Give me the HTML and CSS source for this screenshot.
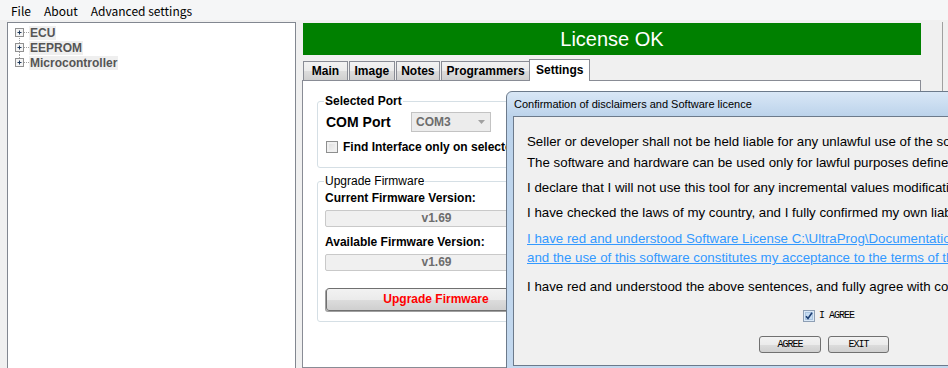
FILE: index.html
```html
<!DOCTYPE html>
<html lang="en">
<head>
    <meta charset="UTF-8">
    <meta name="viewport" content="width=device-width, initial-scale=1.0">
    <title>UltraProg</title>
    <link rel="stylesheet" href="styles.css">
</head>
<body>
    <div class="menubar">
        <span class="menu-item">File</span>
        <span class="menu-item">About</span>
        <span class="menu-item">Advanced settings</span>
    </div>

    <div class="workspace">
        <div class="tree">
            <div class="node">
                <svg class="expander" width="14" height="15" viewBox="0 0 14 15">
                    <line x1="4.5" y1="11" x2="4.5" y2="15" class="dots"/>
                    <line x1="9" y1="7.5" x2="14" y2="7.5" class="dots"/>
                    <rect x="0.5" y="3.5" width="8" height="8" class="box"/>
                    <path d="M2.5 7.5h4M4.5 5.5v4" class="cross"/>
                </svg>
                <span class="node-label">ECU</span>
            </div>
            <div class="node">
                <svg class="expander" width="14" height="15" viewBox="0 0 14 15">
                    <line x1="4.5" y1="0" x2="4.5" y2="3" class="dots"/>
                    <line x1="4.5" y1="12" x2="4.5" y2="15" class="dots"/>
                    <line x1="9" y1="7.5" x2="14" y2="7.5" class="dots"/>
                    <rect x="0.5" y="3.5" width="8" height="8" class="box"/>
                    <path d="M2.5 7.5h4M4.5 5.5v4" class="cross"/>
                </svg>
                <span class="node-label">EEPROM</span>
            </div>
            <div class="node">
                <svg class="expander" width="14" height="15" viewBox="0 0 14 15">
                    <line x1="4.5" y1="0" x2="4.5" y2="3" class="dots"/>
                    <line x1="9" y1="7.5" x2="14" y2="7.5" class="dots"/>
                    <rect x="0.5" y="3.5" width="8" height="8" class="box"/>
                    <path d="M2.5 7.5h4M4.5 5.5v4" class="cross"/>
                </svg>
                <span class="node-label">Microcontroller</span>
            </div>
        </div>

        <div class="right">
            <div class="license">License OK</div>

            <div class="tabs">
                <div class="tab tab-main">Main</div>
                <div class="tab">Image</div>
                <div class="tab">Notes</div>
                <div class="tab">Programmers</div>
                <div class="tab active">Settings</div>
            </div>

            <div class="page">
                <fieldset class="group">
                    <legend class="bold">Selected Port</legend>
                    <div class="port-row">
                        <span class="port-label">COM Port</span>
                        <div class="combo">
                            <span>COM3</span>
                            <svg width="7" height="4" viewBox="0 0 7 4"><path d="M0 0h7L3.5 4z" fill="#a0a0a0"/></svg>
                        </div>
                    </div>
                    <div class="check-row">
                        <span class="checkbox"></span>
                        <span class="bold">Find Interface only on selected port</span>
                    </div>
                </fieldset>

                <fieldset class="group firmware">
                    <legend>Upgrade Firmware</legend>
                    <div class="field-label first">Current Firmware Version:</div>
                    <div class="field-box">v1.69</div>
                    <div class="field-label">Available Firmware Version:</div>
                    <div class="field-box">v1.69</div>
                    <div class="upgrade-btn">Upgrade Firmware</div>
                </fieldset>
            </div>
        </div>

        <div class="side"></div>
    </div>

    <div class="dialog">
        <div class="dialog-title">Confirmation of disclaimers and Software licence</div>
        <div class="dialog-body">
            <p class="line">Seller or developer shall not be held liable for any unlawful use of the software and hardware.</p>
            <p class="line l2">The software and hardware can be used only for lawful purposes defined by law of your country.</p>
            <p class="line l3">I declare that I will not use this tool for any incremental values modification of odometers.</p>
            <p class="line l3">I have checked the laws of my country, and I fully confirmed my own liability for using it.</p>
            <p class="line link">I have red and understood Software License C:\UltraProg\Documentation\License.pdf<br>and the use of this software constitutes my acceptance to the terms of this license.</p>
            <p class="line l6">I have red and understood the above sentences, and fully agree with conditions.</p>

            <div class="agree-row">
                <svg width="12" height="12" viewBox="0 0 12 12">
                    <rect x="0.5" y="0.5" width="11" height="11" fill="#dbe9f7" stroke="#8e9fb4"/>
                    <rect x="2.5" y="2.5" width="7" height="7" fill="#c6dcf2" stroke="#aac4e0"/>
                    <path d="M3 6.2l2 2.3L9 2.8" fill="none" stroke="#1d3f73" stroke-width="1.6"/>
                </svg>
                <span class="agree-text">I AGREE</span>
            </div>

            <div class="button-row">
                <div class="win-btn agree">AGREE</div>
                <div class="win-btn exit">EXIT</div>
            </div>
        </div>
    </div>
</body>
</html>
```

FILE: styles.css
```css
* {
    box-sizing: border-box;
}
html, body {
    margin: 0;
    height: 100%;
    overflow: hidden;
}
body {
    position: relative;
    background: #f0f0f0;
    font-family: "Liberation Sans", Arial, sans-serif;
    font-size: 12px;
    color: #000;
}
.bold {
    font-weight: bold;
}

/* menu */
.menubar {
    height: 20px;
    display: flex;
    align-items: center;
    gap: 13px;
    padding-left: 11px;
    background: #f5f6f7;
    font-family: "Noto Sans CJK SC", "Noto Sans", sans-serif;
    font-size: 12px;
}

.workspace {
    display: flex;
    height: 348px;
    padding: 2px 0 0 7px;
}

/* tree */
.tree {
    width: 289px;
    height: 360px;
    background: #fff;
    border: 1px solid #828790;
    padding: 2px 0 0 7px;
}
.node {
    display: flex;
    align-items: center;
    height: 15px;
}
.expander {
    flex: none;
}
.expander .dots {
    stroke: #a0a0a0;
    stroke-dasharray: 1 1;
}
.expander .box {
    fill: #f4f4f4;
    stroke: #919191;
}
.expander .cross {
    stroke: #1e395b;
}
.node-label {
    font-weight: bold;
    color: #555;
    background: #efefef;
    line-height: 14px;
    padding: 0 1px;
}

/* right pane */
.right {
    width: 619px;
    margin-left: 6px;
    display: flex;
    flex-direction: column;
}
.license {
    height: 32px;
    margin: 1px 0 0 1px;
    background: #008000;
    color: #fff;
    font-size: 20px;
    line-height: 32px;
    text-align: center;
}
.tabs {
    display: flex;
    align-items: flex-start;
    height: 22px;
    margin: 4px 0 -1px 0;
    padding-left: 1px;
    position: relative;
    z-index: 1;
}
.tab {
    height: 19px;
    margin-top: 2px;
    margin-right: 1px;
    padding: 0 4.5px;
    line-height: 18px;
    font-weight: bold;
    border: 1px solid #898c95;
    border-bottom: none;
    background: linear-gradient(#f2f2f2, #ebebeb 50%, #dddddd 50%, #cfcfcf);
}
.tab-main {
    min-width: 45px;
    text-align: center;
}
.tab.active {
    height: 22px;
    margin-top: 0;
    margin-left: -2px;
    padding: 0 6px;
    line-height: 20px;
    background: #fff;
}
.page {
    flex: 1;
    background: #fff;
    border: 1px solid #898c95;
    padding: 13px 0 0 14px;
}

.group {
    width: 245px;
    margin: 0;
    padding: 0 6px 14px 6px;
    border: 1px solid #d5dfe5;
    border-radius: 3px;
}
.group legend {
    padding: 0 1px;
    line-height: 14px;
}
.port-row {
    display: flex;
    align-items: center;
    height: 20px;
    margin: 4px 0 0 2px;
}
.port-label {
    width: 85px;
    font-size: 14px;
    font-weight: bold;
}
.combo {
    width: 80px;
    height: 20px;
    display: flex;
    align-items: center;
    justify-content: space-between;
    padding: 0 5px 0 4px;
    background: #ececec;
    border: 1px solid #c3c3c3;
    color: #6d6d6d;
    font-weight: bold;
}
.check-row {
    display: flex;
    align-items: center;
    gap: 5px;
    height: 13px;
    margin: 8px 0 0 2px;
    white-space: nowrap;
}
.checkbox {
    width: 12px;
    height: 12px;
    border: 1px solid #8e8f8f;
    background: linear-gradient(135deg, #dcdcdc, #f6f6f6);
    box-shadow: inset 0 0 0 2px #f0f0f0;
}

.firmware {
    margin-top: 6px;
    padding-bottom: 10px;
}
.field-label {
    font-weight: bold;
    line-height: 14px;
    margin: 8px 0 0 1px;
}
.field-label.first {
    margin-top: 3px;
}
.field-box {
    width: 223px;
    height: 17px;
    margin: 5px 0 0 1px;
    background: #f0f0f0;
    border: 1px solid #c9c9c9;
    border-radius: 2px;
    color: #6d6d6d;
    font-weight: bold;
    text-align: center;
    line-height: 15px;
}
.upgrade-btn {
    width: 220px;
    height: 23px;
    margin: 17px 0 0 2px;
    border: 1px solid #707070;
    border-radius: 3px;
    box-shadow: -1px 1px 0 #a0a0a0;
    background: linear-gradient(#f2f2f2, #ebebeb 50%, #dddddd 50%, #cfcfcf);
    color: #ff0000;
    font-weight: bold;
    text-align: center;
    line-height: 21px;
}

.side {
    flex: 1;
    margin-left: 21px;
    border-left: 1px solid #a0a0a0;
}

/* licence dialog */
.dialog {
    position: absolute;
    left: 506px;
    top: 91px;
    width: 640px;
    height: 300px;
    padding: 0 6px 6px 6px;
    border: 1px solid #6c7a8b;
    border-radius: 6px 6px 0 0;
    background: linear-gradient(#d9e7f6 0, #bcd3eb 24px, #c4d9ef 100%);
}
.dialog-title {
    height: 24px;
    line-height: 24px;
    padding-left: 1px;
    font-family: "Liberation Sans", Arial, sans-serif;
    font-size: 11px;
}
.dialog-body {
    height: 250px;
    padding: 15px 0 0 13px;
    background: #f0f0f0;
    border: 1px solid #6c7a8b;
    font-size: 13.3px;
}
.line {
    margin: 0;
    line-height: 19px;
    white-space: nowrap;
}
.line.l2 {
    margin-top: 2px;
}
.line.l3 {
    margin-top: 6px;
}
.line.link {
    margin-top: 7px;
    color: #3399ff;
    text-decoration: underline;
}
.line.l6 {
    margin-top: 10px;
}
.agree-row {
    display: flex;
    align-items: center;
    gap: 4px;
    height: 19px;
    margin-top: 10px;
    padding-left: 276px;
}
.agree-text,
.win-btn {
    font-family: "Liberation Mono", monospace;
    font-size: 10px;
    letter-spacing: -1px;
}
.button-row {
    display: flex;
    gap: 7px;
    margin-top: 11px;
    padding-left: 232px;
}
.win-btn {
    height: 17px;
    line-height: 15px;
    text-align: center;
    border: 1px solid #707070;
    border-radius: 3px;
    background: linear-gradient(#f2f2f2, #ebebeb 50%, #dddddd 50%, #cfcfcf);
}
.win-btn.agree {
    width: 62px;
}
.win-btn.exit {
    width: 61px;
}
```
